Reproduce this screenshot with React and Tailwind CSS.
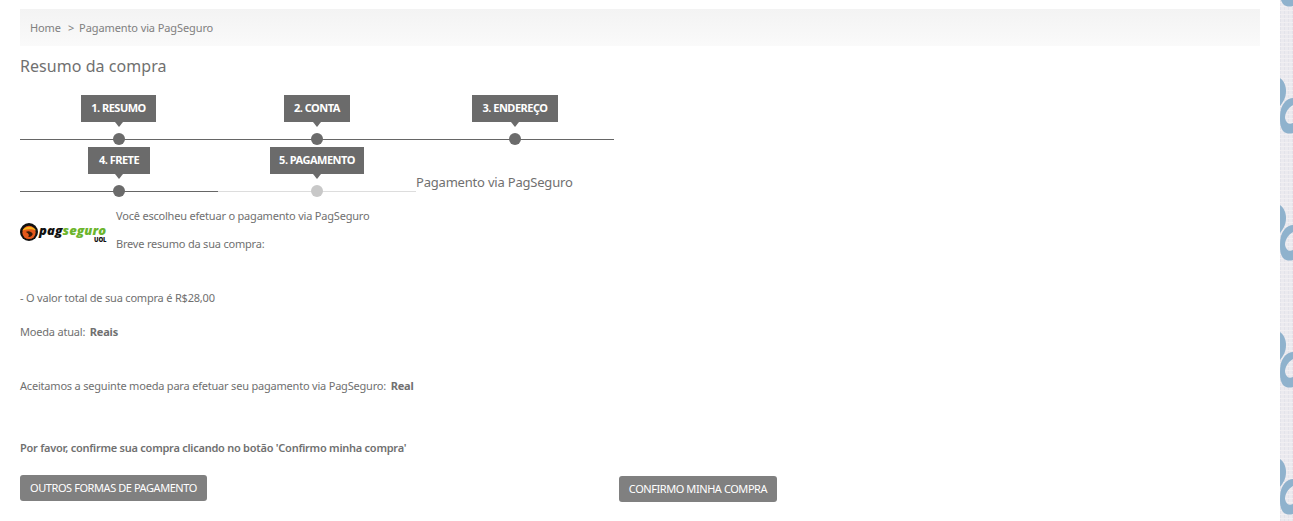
const sans = "font-['Noto_Sans',sans-serif]";

const rows = [
  [
    { label: "1. RESUMO", width: "w-[75px] mr-px", done: true },
    { label: "2. CONTA", width: "w-[66px]", done: true },
    { label: "3. ENDEREÇO", width: "w-[86px]", done: true },
  ],
  [
    { label: "4. FRETE", width: "w-[62px]", done: true },
    { label: "5. PAGAMENTO", width: "w-[94px]", done: false },
  ],
];

function Step({ label, width, done }) {
  return (
    <div className="flex h-[52px] w-[198px] flex-col items-center">
      <div
        className={`flex h-[27px] ${width} items-center justify-center whitespace-nowrap bg-[#6b6b6b] text-[11px] font-bold tracking-[-0.5px] text-white`}
      >
        {label}
      </div>
      <div className="h-0 w-0 border-x-[4px] border-t-[5px] border-x-transparent border-t-[#6b6b6b]" />
      <div
        className={`mt-[6px] flex h-[12px] w-full justify-center bg-[length:100%_1px] bg-center bg-no-repeat ${
          done
            ? "bg-[linear-gradient(#666,#666)]"
            : "bg-[linear-gradient(#ddd,#ddd)]"
        }`}
      >
        <span
          className={`h-[12px] w-[12px] rounded-full ${done ? "bg-[#6b6b6b]" : "bg-[#c8c8c8]"}`}
        />
      </div>
    </div>
  );
}

function Logo() {
  return (
    <div className="flex h-[20px] w-[88px] items-start">
      <svg width="18" height="18" viewBox="0 0 19 19" className="shrink-0">
        <circle cx="9.5" cy="9.5" r="9.5" fill="#111" />
        <circle cx="9.5" cy="10" r="7" fill="#e4581b" />
        <path d="M2.5 8C5 3 14 2.5 17 8 13 6 8 6 2.5 8Z" fill="#f7b51c" />
        <path d="M6 9.5c3-1.4 6-.6 7.5 2-1 2.6-3 3.6-5 3 1.4-1 1.4-3.4-2.5-5Z" fill="#3a1a08" />
      </svg>
      <div className="ml-[1px] flex flex-col items-end font-['Open_Sans',sans-serif]">
        <div className="h-[13px] whitespace-nowrap pt-[1px] text-[13px] leading-[12px] font-extrabold tracking-[0.1px] italic">
          <span className="text-[#111]">pag</span>
          <span className="text-[#6cb52d]">seguro</span>
        </div>
        <div className="mt-[1px] h-[6px] text-[6px] leading-[6px] font-extrabold text-[#111]">UOL</div>
      </div>
    </div>
  );
}

function Ornament({ y }) {
  return (
    <g transform={`translate(0 ${y})`} fill="#8fb2cd">
      <path d="M0 0C4 3 6 8 6 13C6 20 3 24 0 28Z" />
      <path d="M13 20C7 20 3 25 1 31C0 35 0 38 0 42C0 47 1 50 3 53C6 56 10 56 13 55L13 45C9 47 6 45 5 40C5 35 8 30 13 27Z" />
    </g>
  );
}

function Pattern() {
  return (
    <svg width="13" height="521" viewBox="0 0 13 521" className="block">
      <defs>
        <pattern id="weave" width="4" height="4" patternUnits="userSpaceOnUse">
          <rect width="4" height="4" fill="#ebeaef" />
          <rect width="1" height="4" fill="#e3e3ea" />
          <rect y="2" width="4" height="1" fill="#f1eff2" />
        </pattern>
      </defs>
      <rect width="13" height="521" fill="url(#weave)" />
      {[-49, 78, 205, 332, 459].map((y) => (
        <Ornament key={y} y={y} />
      ))}
    </svg>
  );
}

export default function App() {
  return (
    <div className={`flex h-[521px] overflow-hidden bg-white text-[#707070] ${sans}`}>
      <main className="h-full w-[1280px] shrink-0 px-[20px] pt-[9px]">
        <div className="flex h-[37px] w-[1240px] items-center bg-gradient-to-b from-[#f3f3f3] to-[#fafafa] px-[10px] pt-[1px] text-[11px] tracking-[-0.1px] text-[#808080]">
          <span>Home</span>
          <span className="mr-[5px] ml-[7px]">&gt;</span>
          <span>Pagamento via PagSeguro</span>
        </div>

        <h1 className="mt-[8px] h-[24px] text-[16px] leading-[24px] tracking-[0.05px] text-[#707070]">
          Resumo da compra
        </h1>

        <div className="mt-[17px] flex w-[594px] flex-wrap">
          {rows.flat().map((step) => (
            <Step key={step.label} {...step} />
          ))}
          <div className="w-[198px] whitespace-nowrap pt-[27px] text-[13px] leading-[17px] tracking-[-0.2px]">
            Pagamento via PagSeguro
          </div>
        </div>

        <div className="mt-[9px] flex h-[58px] text-[11px] leading-[16px] tracking-[-0.2px]">
          <div className="w-[96px] pt-[15px]">
            <Logo />
          </div>
          <div>
            <p className="h-[28px]">Você escolheu efetuar o pagamento via PagSeguro</p>
            <p>Breve resumo da sua compra:</p>
          </div>
        </div>

        <div className="text-[11px] leading-[16px] tracking-[-0.2px]">
          <p className="pt-[24px]">- O valor total de sua compra é R$28,00</p>
          <p className="mt-[18px]">
            Moeda atual: <b className="ml-[2px]">Reais</b>
          </p>
          <p className="mt-[38px]">
            Aceitamos a seguinte moeda para efetuar seu pagamento via PagSeguro:{" "}
            <b className="ml-[2px]">Real</b>
          </p>
          <p className="mt-[46px] font-semibold tracking-[-0.25px]">
            Por favor, confirme sua compra clicando no botão 'Confirmo minha compra'
          </p>
        </div>

        <div className="mt-[19px] grid grid-cols-[599px_auto] items-start justify-start">
          <button className="h-[26px] w-[187px] rounded-[3px] bg-[#808080] text-[11px] tracking-[-0.43px] whitespace-nowrap text-white">
            OUTROS FORMAS DE PAGAMENTO
          </button>
          <button className="mt-[1px] h-[26px] w-[158px] rounded-[3px] bg-[#808080] text-[11px] tracking-[-0.43px] whitespace-nowrap text-white">
            CONFIRMO MINHA COMPRA
          </button>
        </div>
      </main>
      <aside className="w-[13px] shrink-0">
        <Pattern />
      </aside>
    </div>
  );
}
